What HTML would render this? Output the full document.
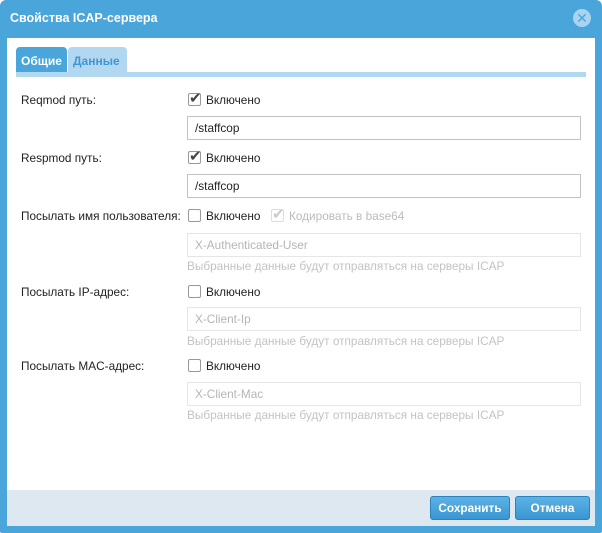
<!DOCTYPE html>
<html><head><meta charset="utf-8"><style>
*{box-sizing:border-box;margin:0;padding:0}
body{width:602px;height:533px;background:#fff;font-family:"Liberation Sans","DejaVu Sans",sans-serif;font-size:11.8px;color:#222;position:relative;overflow:hidden}
.win{position:absolute;left:0;top:0;width:602px;height:533px;background:#4aa5db;border-radius:6px 6px 2px 2px}
.title{position:absolute;left:10px;top:11px;color:#fff;font-weight:bold;font-size:12.5px}
.close{position:absolute;left:573px;top:9px;width:18px;height:18px;border-radius:50%;background:#a9d3ee;color:#4aa5db;font-size:14px;line-height:18px;text-align:center;font-weight:bold}
.body{position:absolute;left:7px;top:38px;width:588px;height:452px;background:#fff}
.foot{position:absolute;left:7px;top:490px;width:588px;height:36px;background:#dde8f1}
.tab{position:absolute;top:47px;height:26px;border-radius:4px 4px 0 0;font-weight:bold;font-size:12px;line-height:28px;padding-left:5px}
.strip{position:absolute;left:16px;top:72px;width:570px;height:5px;background:#b1d8f0}
.lbl{position:absolute;left:21px}
.cb{position:absolute;width:13px;height:13px;border:1px solid #999;border-radius:2px;background:#fff}
.cbt{position:absolute}
.chk{position:absolute;font-size:15px;color:#444;line-height:13px}
.inp{position:absolute;left:187px;width:394px;height:24px;border:1px solid #c2c2c2;padding-left:7px;line-height:22px;color:#222}
.inp.d{border-color:#e6e6e6;color:#b5b5b5}
.hint{position:absolute;left:187px;color:#c3c3c3}
.btn{position:absolute;top:496px;height:24px;border:1px solid #2b82bd;border-radius:3px;background:linear-gradient(#5db2e5,#3996d2);color:#fff;font-weight:bold;text-align:center;line-height:22px}
</style></head><body>
<div class="win"></div>
<div class="title">Свойства ICAP-сервера</div>
<div class="close">✕</div>
<div class="body"></div>
<div class="foot"></div>
<div class="tab" style="left:16px;width:51px;background:#4aa5db;color:#fff">Общие</div>
<div class="tab" style="left:68px;width:59px;background:#b1d8f0;color:#3f97cf;padding-left:5px">Данные</div>
<div class="strip"></div>

<div class="lbl" style="top:93px">Reqmod путь:</div>
<div class="cb" style="left:188px;top:93px"></div><div class="chk" style="left:189px;top:92px">✔</div>
<div class="cbt" style="left:206px;top:93px">Включено</div>
<div class="inp" style="top:116px">/staffcop</div>

<div class="lbl" style="top:151px">Respmod путь:</div>
<div class="cb" style="left:188px;top:151px"></div><div class="chk" style="left:189px;top:150px">✔</div>
<div class="cbt" style="left:206px;top:151px">Включено</div>
<div class="inp" style="top:174px">/staffcop</div>

<div class="lbl" style="top:209px">Посылать имя пользователя:</div>
<div class="cb" style="left:188px;top:209px"></div>
<div class="cbt" style="left:206px;top:209px">Включено</div>
<div class="cb" style="left:271px;top:209px;border-color:#ddd"></div><div class="chk" style="left:272px;top:208px;color:#ccc">✔</div>
<div class="cbt" style="left:289px;top:209px;color:#bbb">Кодировать в base64</div>
<div class="inp d" style="top:233px">X-Authenticated-User</div>
<div class="hint" style="top:259px">Выбранные данные будут отправляться на серверы ICAP</div>

<div class="lbl" style="top:285px">Посылать IP-адрес:</div>
<div class="cb" style="left:188px;top:285px"></div>
<div class="cbt" style="left:206px;top:285px">Включено</div>
<div class="inp d" style="top:307px">X-Client-Ip</div>
<div class="hint" style="top:334px">Выбранные данные будут отправляться на серверы ICAP</div>

<div class="lbl" style="top:359px">Посылать MAC-адрес:</div>
<div class="cb" style="left:188px;top:359px"></div>
<div class="cbt" style="left:206px;top:359px">Включено</div>
<div class="inp d" style="top:382px">X-Client-Mac</div>
<div class="hint" style="top:408px">Выбранные данные будут отправляться на серверы ICAP</div>

<div class="btn" style="left:430px;width:80px">Сохранить</div>
<div class="btn" style="left:515px;width:75px">Отмена</div>
</body></html>
